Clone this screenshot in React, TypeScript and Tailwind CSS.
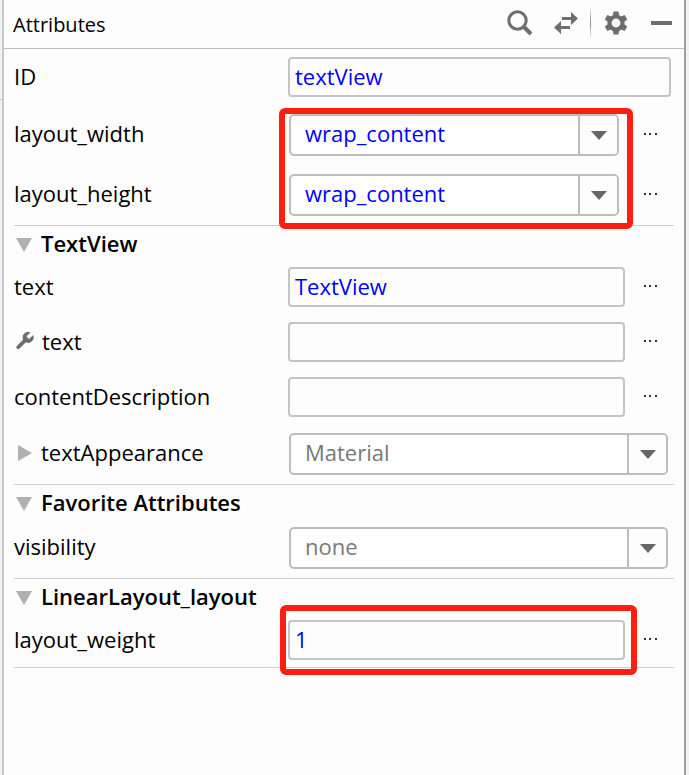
import { ReactNode, useId } from 'react';

const labelText = 'text-[22px] leading-8 text-black';

function Triangle({ open }: { open: boolean }) {
  return (
    <svg width="20" height="18" viewBox="0 0 20 18" fill="#b0b0b0" aria-hidden="true">
      {open ? <path d="M2 4h16l-8 14z" /> : <path d="M4 2v16l14-8z" />}
    </svg>
  );
}

function WrenchIcon() {
  return (
    <svg width="21" height="20" viewBox="1 1 22 22" fill="#6e6e6e" aria-hidden="true">
      <path d="M14.7 6.3a1 1 0 0 0 0 1.4l1.6 1.6a1 1 0 0 0 1.4 0l3.77-3.77a6 6 0 0 1-7.94 7.94l-6.91 6.91a2.12 2.12 0 0 1-3-3l6.91-6.91a6 6 0 0 1 7.94-7.94l-3.76 3.76z" />
    </svg>
  );
}

function SearchIcon() {
  return (
    <svg width="26" height="26" viewBox="0 0 26 26" fill="none" stroke="#6e6e6e" aria-hidden="true">
      <circle cx="10.5" cy="10.5" r="8.7" strokeWidth="3" />
      <path d="M16.5 16.5l7.5 7.5" strokeWidth="4" />
    </svg>
  );
}

function SwapIcon() {
  return (
    <svg width="26" height="22" viewBox="0 0 26 22" fill="#6e6e6e" aria-hidden="true">
      <path d="M9 5h9V0l7 6.5-7 6.500V8H9z" />
      <path d="M17 14H8V9L1 15.500 8 22v-5h9z" />
    </svg>
  );
}

function GearIcon() {
  return (
    <svg width="24" height="24" viewBox="0 0 24 24" fill="#6e6e6e" aria-hidden="true">
      <circle cx="12" cy="12" r="6.5" fill="none" stroke="#6e6e6e" strokeWidth="4.2" />
      {[0, 60, 120, 180, 240, 300].map((angle) => (
        <path key={angle} d="M9.500 0.500h5l0.800 5h-6.600z" transform={`rotate(${angle} 12 12)`} />
      ))}
    </svg>
  );
}

function MoreButton({ name }: { name: string }) {
  return (
    <button type="button" aria-label={`More options for ${name}`} className="ml-3 flex h-8 w-[26px] items-center justify-center">
      <svg width="14" height="4" viewBox="0 0 14 4" fill="#333" aria-hidden="true">
        <path d="M1 0h2v2H1zM6 0h2v2H6zM12 0h2v2h-2z" />
      </svg>
    </button>
  );
}

type RowProps = { name: string; icon?: ReactNode; value?: string; wide?: boolean };

function RowLabel({ id, name, icon, raised }: { id: string; name: string; icon?: ReactNode; raised?: boolean }) {
  return (
    <label htmlFor={id} className={`flex w-[274px] shrink-0 items-center gap-[7px] ${raised ? 'pb-1' : 'pb-0.5'} ${labelText}`}>
      {icon}
      {name}
    </label>
  );
}

function TextRow({ name, icon, value, wide }: RowProps) {
  const id = useId();
  return (
    <div className={`flex items-center pt-2 ${wide ? 'pb-2 pr-[3px]' : 'pb-[7px] pr-[11px]'}`}>
      <RowLabel id={id} name={name} icon={icon} />
      <input
        id={id}
        type="text"
        defaultValue={value}
        className="h-10 min-w-0 flex-1 rounded-[4px] border-2 border-[#c4c4c4] bg-[#fdfdfd] px-[5px] pb-0.5 text-[22px] text-[#0000ff] outline-none"
      />
      {!wide && <MoreButton name={name} />}
    </div>
  );
}

function SelectRow({ name, icon, value, wide }: RowProps) {
  const id = useId();
  return (
    <div className={`flex items-center py-[9px] ${wide ? 'pr-[6px]' : 'pr-[11px]'}`}>
      <RowLabel id={id} name={name} icon={icon} raised />
      <div className={`relative ml-px h-[42px] min-w-0 flex-1 ${wide ? '' : 'mr-[6px]'}`}>
        <select
          id={id}
          defaultValue={value}
          className={`h-full w-full appearance-none rounded-[5px] border-2 border-[#bdbdbd] bg-white pl-[14px] pr-10 pb-1 text-[22px] outline-none ${
            wide ? 'text-[#787878]' : 'text-[#0000ff]'
          }`}
        >
          <option>{value}</option>
        </select>
        <span className="pointer-events-none absolute inset-y-0.5 right-0.5 flex w-[39px] items-center justify-center rounded-r-[3px] border-l-2 border-[#bdbdbd] bg-[#fdfdfd]">
          <svg width="16" height="9" viewBox="0 0 16 9" fill="#666" aria-hidden="true">
            <path d="M0 0h16L8 9z" />
          </svg>
        </span>
      </div>
      {!wide && <MoreButton name={name} />}
    </div>
  );
}

function Section({ title, children }: { title: string; children: ReactNode }) {
  return (
    <section className="border-b border-[#cecece]">
      <h2 className="h-[33px] text-[22px] font-semibold leading-8">
        <button type="button" aria-expanded="true" className="flex items-center gap-[7px] pt-px">
          <Triangle open />
          {title}
        </button>
      </h2>
      {children}
    </section>
  );
}

export default function App() {
  return (
    <div className="flex min-h-screen bg-[#f2f2f2] font-['Open_Sans','Noto_Sans',sans-serif] text-black">
      <div className="h-[100px] w-[2px] border-b border-[#c4c4c4]" />
      <main className="min-w-0 flex-1 border-l-2 border-r-2 border-l-[#c8c8c8] border-r-[#a0a0a0] bg-[#fdfdfd]">
        <header className="flex h-[49px] items-center justify-between border-b border-[#bdbdbd] pl-[9px] pr-3">
          <h1 className="pt-0.5 text-[20px] leading-8">Attributes</h1>
          <div className="flex items-center pb-0.5">
            <button type="button" aria-label="Search">
              <SearchIcon />
            </button>
            <button type="button" aria-label="Swap view" className="ml-5">
              <SwapIcon />
            </button>
            <span className="ml-[11px] h-7 w-px bg-gradient-to-b from-[#e4e4e4] via-[#8c8c8c] to-[#e4e4e4]" />
            <button type="button" aria-label="Settings" className="ml-[13px]">
              <GearIcon />
            </button>
            <button type="button" aria-label="Hide" className="ml-[23px] flex h-6 w-[21px] items-center">
              <span className="h-1 w-full bg-[#6e6e6e]" />
            </button>
          </div>
        </header>

        <div className="mx-[10px]">
          <div className="border-b border-[#cecece]">
            <TextRow name="ID" value="textView" wide />
            <div className="relative">
              <SelectRow name="layout_width" value="wrap_content" />
              <SelectRow name="layout_height" value="wrap_content" />
              <div className="pointer-events-none absolute -bottom-1 left-[265px] right-[41px] top-[3px] rounded-[6px] border-[6px] border-[#ff1e10]" />
            </div>
          </div>

          <Section title="TextView">
            <TextRow name="text" value="TextView" />
            <TextRow name="text" icon={<WrenchIcon />} />
            <TextRow name="contentDescription" />
            <SelectRow name="textAppearance" value="Material" icon={<Triangle open={false} />} wide />
          </Section>

          <Section title="Favorite Attributes">
            <SelectRow name="visibility" value="none" wide />
          </Section>

          <Section title="LinearLayout_layout">
            <div className="relative">
              <TextRow name="layout_weight" value="1" />
              <div className="pointer-events-none absolute -bottom-2 -top-[7px] left-[266px] right-[37px] rounded-[6px] border-[6px] border-[#ff1e10]" />
            </div>
          </Section>
        </div>
      </main>
      <div className="w-[3px]" />
    </div>
  );
}
